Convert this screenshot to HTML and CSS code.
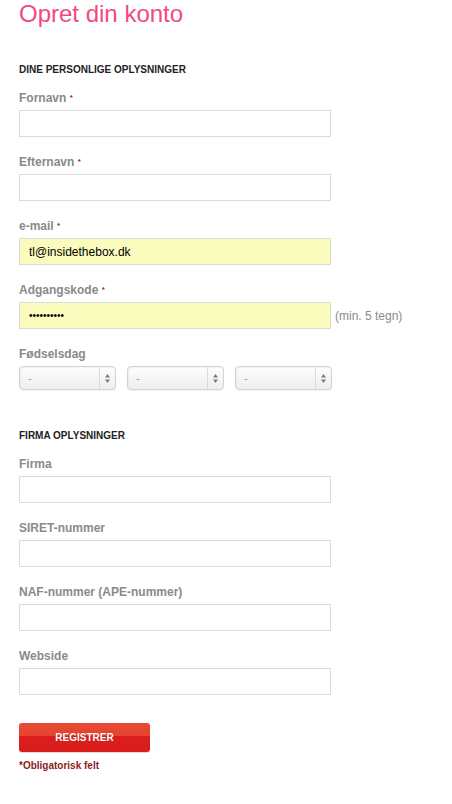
FILE: index.html
```html
<!DOCTYPE html>
<html lang="da">
<head>
<meta charset="utf-8">
<title>Opret din konto</title>
<link rel="stylesheet" href="styles.css">
</head>
<body>
<main class="page">
  <h1 class="title">Opret din konto</h1>
  <form class="form">
    <section class="section">
      <h2 class="section-title">DINE PERSONLIGE OPLYSNINGER</h2>
      <div class="field">
        <label class="label">Fornavn <span class="req">*</span></label>
        <input class="input" type="text">
      </div>
      <div class="field">
        <label class="label">Efternavn <span class="req">*</span></label>
        <input class="input" type="text">
      </div>
      <div class="field">
        <label class="label">e-mail <span class="req">*</span></label>
        <input class="input autofill" type="text" value="tl@insidethebox.dk">
      </div>
      <div class="field">
        <label class="label">Adgangskode <span class="req">*</span></label>
        <div class="row">
          <input class="input autofill password" type="password" value="hemmelig12">
          <span class="hint">(min. 5 tegn)</span>
        </div>
      </div>
      <div class="field">
        <label class="label">Fødselsdag</label>
        <div class="selects">
          <div class="select-wrap"><select class="select"><option>-</option></select><span class="stepper"><svg width="7" height="11" viewBox="0 0 7 11"><path d="M3.5 1 L6 4.5 H1 Z" fill="#7a7a7a"/><path d="M3.5 10 L6 6.5 H1 Z" fill="#7a7a7a"/></svg></span></div>
          <div class="select-wrap"><select class="select"><option>-</option></select><span class="stepper"><svg width="7" height="11" viewBox="0 0 7 11"><path d="M3.5 1 L6 4.5 H1 Z" fill="#7a7a7a"/><path d="M3.5 10 L6 6.5 H1 Z" fill="#7a7a7a"/></svg></span></div>
          <div class="select-wrap"><select class="select"><option>-</option></select><span class="stepper"><svg width="7" height="11" viewBox="0 0 7 11"><path d="M3.5 1 L6 4.5 H1 Z" fill="#7a7a7a"/><path d="M3.5 10 L6 6.5 H1 Z" fill="#7a7a7a"/></svg></span></div>
        </div>
      </div>
    </section>
    <section class="section">
      <h2 class="section-title">FIRMA OPLYSNINGER</h2>
      <div class="field">
        <label class="label">Firma</label>
        <input class="input" type="text">
      </div>
      <div class="field">
        <label class="label">SIRET-nummer</label>
        <input class="input" type="text">
      </div>
      <div class="field">
        <label class="label">NAF-nummer (APE-nummer)</label>
        <input class="input" type="text">
      </div>
      <div class="field">
        <label class="label">Webside</label>
        <input class="input" type="text">
      </div>
    </section>
    <button class="button" type="button">REGISTRER</button>
    <p class="note">*Obligatorisk felt</p>
  </form>
</main>
</body>
</html>
```

FILE: styles.css
```css
* { box-sizing: border-box; }
html, body { margin: 0; padding: 0; background: #fff; }
body { font-family: "Liberation Sans", Arial, sans-serif; }

.page { padding: 0 0 0 19px; }

.title {
  margin: 0;
  font-size: 24px;
  line-height: 28px;
  font-weight: normal;
  color: #f2497f;
}

.form { display: flex; flex-direction: column; align-items: flex-start; }

.section { display: flex; flex-direction: column; margin-top: 36px; width: 100%; }
.section + .section { margin-top: 40px; }

.section-title {
  margin: 0 0 14px 0;
  font-size: 10px;
  line-height: 12px;
  font-weight: bold;
  color: #222;
}

.field { display: flex; flex-direction: column; }
.field + .field { margin-top: 17px; }

.label {
  font-size: 12px;
  line-height: 16px;
  font-weight: bold;
  color: #8a8a8a;
  margin-bottom: 4px;
}
.req { color: #a31b1b; font-size: 8px; vertical-align: 2px; }

.input {
  width: 312px;
  height: 27px;
  border: 1px solid #dcdcdc;
  background: #fff;
  padding: 0 9px;
  font-family: "Liberation Sans", Arial, sans-serif;
  font-size: 12px;
  color: #000;
  outline: none;
  margin: 0;
}
.autofill { background: #fafcbd; }
.password { font-size: 10px; }

.row { display: flex; align-items: center; gap: 4px; }
.hint { font-size: 12px; color: #8a8a8a; }

.selects { display: flex; gap: 11px; }
.select-wrap { position: relative; width: 97px; height: 24px; }
.select {
  -webkit-appearance: none;
  appearance: none;
  width: 97px;
  height: 24px;
  margin: 0;
  border: 1px solid #d2d2d2;
  border-radius: 4px;
  background: linear-gradient(#fdfdfd, #eeeeee);
  box-shadow: inset 1px 1px 1px rgba(0,0,0,0.04), 0 1px 1px rgba(0,0,0,0.06);
  padding: 0 0 0 8px;
  font-family: "Liberation Sans", Arial, sans-serif;
  font-size: 11px;
  color: #9a9a9a;
  outline: none;
}
.stepper {
  position: absolute;
  top: 1px;
  right: 1px;
  bottom: 1px;
  width: 16px;
  border-left: 1px solid #dadada;
  display: flex;
  align-items: center;
  justify-content: center;
  pointer-events: none;
}

.button {
  margin-top: 28px;
  width: 131px;
  height: 29px;
  border: 0;
  border-radius: 3px;
  background: linear-gradient(#e74a33 0%, #e5432f 45%, #dc1e1e 46%, #d81c1c 100%);
  box-shadow: 0 1px 1px rgba(0,0,0,0.15);
  color: #fff;
  font-family: "Liberation Sans", Arial, sans-serif;
  font-size: 10px;
  font-weight: bold;
  text-shadow: 0 0 1px rgba(120,0,0,0.5);
  padding: 0;
}

.note {
  margin: 8px 0 0 0;
  font-size: 10px;
  line-height: 12px;
  font-weight: bold;
  color: #8b1c1c;
}
```
